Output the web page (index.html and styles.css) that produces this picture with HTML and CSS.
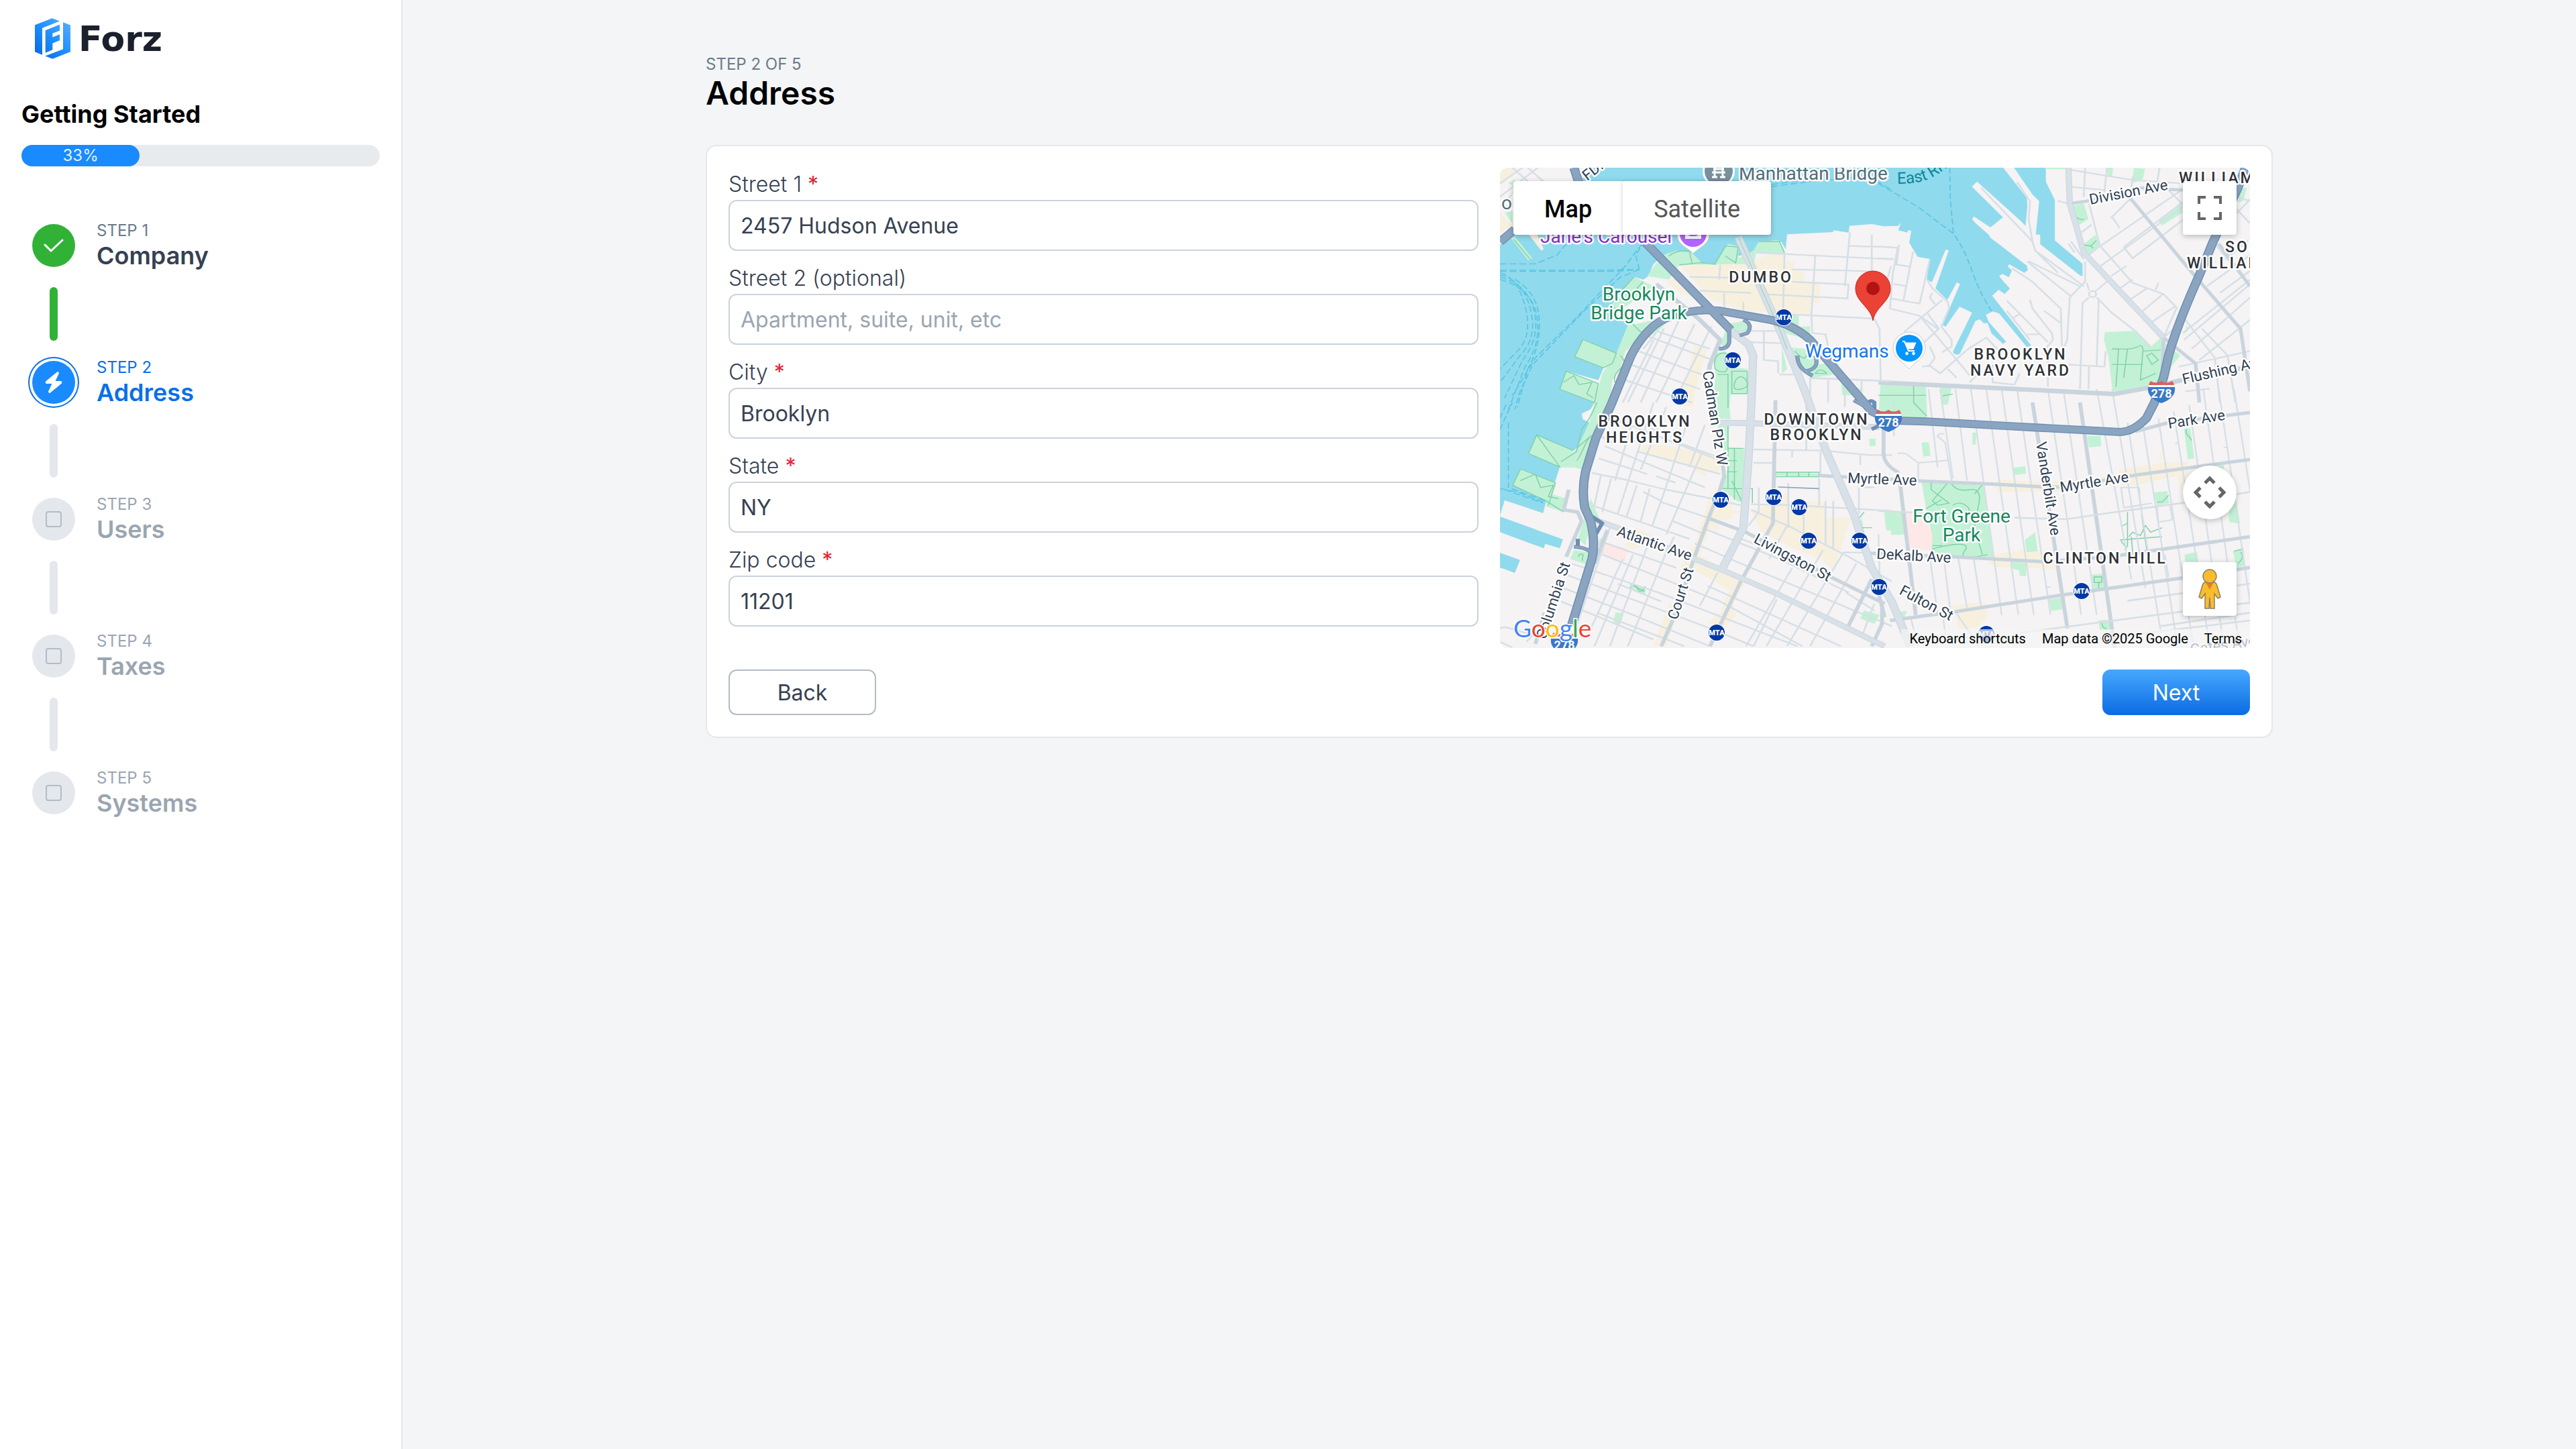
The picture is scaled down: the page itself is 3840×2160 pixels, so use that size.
FILE: index.html
```html
<!DOCTYPE html>
<html lang="en">
<head>
<meta charset="utf-8">
<title>Forz – Getting Started</title>
<link rel="stylesheet" href="styles.css">
</head>
<body>
<div class="app">
  <aside class="sidebar">
    <a class="logo" href="#">
      <svg class="logo-mark" viewBox="36 22 159 182" aria-hidden="true">
        <defs>
          <linearGradient id="lg" x1="36" y1="190" x2="190" y2="40" gradientUnits="userSpaceOnUse">
            <stop offset="0" stop-color="#0a66e0"/><stop offset=".45" stop-color="#1a8aff"/><stop offset="1" stop-color="#52adff"/>
          </linearGradient>
        </defs>
        <g fill="url(#lg)">
          <path d="M36 52 113 22l34 13-78 31v120l-33-14z"/>
          <path d="M83 76l64-26v28l-32 12v17l32-13v27l-32 13v29l-32 14z"/>
          <path d="M162 40l33 13v119l-80 32-33-13 80-31z"/>
        </g>
      </svg>
      <span class="logo-text">Forz</span>
    </a>
    <h2 class="side-title">Getting Started</h2>
    <div class="progress"><div class="progress-fill" style="width:33%">33%</div></div>
    <ol class="steps">
      <li class="step done">
        <span class="dot"><svg viewBox="0 0 64 64"><path d="M19 31l9 9 17-16" fill="none" stroke="#fff" stroke-width="3" stroke-linecap="round" stroke-linejoin="round"/></svg></span>
        <span class="step-text"><span class="step-no">STEP 1</span><span class="step-name">Company</span></span>
      </li>
      <li class="line line-done"></li>
      <li class="step current">
        <span class="dot"><svg viewBox="0 0 64 64"><path d="M38 17L21 31q-1 2 1 2h9l-6 13 1 1 17-14q1-2-1-2h-9l6-13z" fill="#fff" stroke="#fff" stroke-width="2" stroke-linejoin="round"/></svg></span>
        <span class="step-text"><span class="step-no">STEP 2</span><span class="step-name">Address</span></span>
      </li>
      <li class="line"></li>
      <li class="step">
        <span class="dot"><span class="stop"></span></span>
        <span class="step-text"><span class="step-no">STEP 3</span><span class="step-name">Users</span></span>
      </li>
      <li class="line"></li>
      <li class="step">
        <span class="dot"><span class="stop"></span></span>
        <span class="step-text"><span class="step-no">STEP 4</span><span class="step-name">Taxes</span></span>
      </li>
      <li class="line"></li>
      <li class="step">
        <span class="dot"><span class="stop"></span></span>
        <span class="step-text"><span class="step-no">STEP 5</span><span class="step-name">Systems</span></span>
      </li>
    </ol>
  </aside>

  <main class="main">
    <div class="content">
      <header class="head">
        <div class="head-step">STEP 2 OF 5</div>
        <h1 class="head-title">Address</h1>
      </header>
      <form class="card">
        <div class="columns">
          <div class="fields">
            <div class="field"><label for="s1">Street 1 <span class="req">*</span></label><input id="s1" type="text" value="2457 Hudson Avenue"></div>
            <div class="field"><label for="s2">Street 2 (optional)</label><input id="s2" type="text" placeholder="Apartment, suite, unit, etc"></div>
            <div class="field"><label for="city">City <span class="req">*</span></label><input id="city" type="text" value="Brooklyn"></div>
            <div class="field"><label for="state">State <span class="req">*</span></label><input id="state" type="text" value="NY"></div>
            <div class="field"><label for="zip">Zip code <span class="req">*</span></label><input id="zip" type="text" value="11201"></div>
          </div>

          <div class="map">
            <svg class="map-canvas" viewBox="0 0 1118 716" role="img" aria-label="Map of Brooklyn">
              <defs>
                <g id="mta"><circle r="13" fill="#fff"/><circle r="12" fill="#0039a6"/><text class="mta" y="4">MTA</text></g>
                <g id="i278">
                  <path d="M-19-11Q-18-15-16-17-8-12 0-17 8-12 16-17 18-15 19-11z" fill="#d9625c"/>
                  <path d="M-19-11H19V-8H-19z" fill="#fff"/>
                  <path d="M-20-8H20Q22 8 0 16-22 8-20-8z" fill="#3a78c9"/>
                  <text class="shield" y="8">278</text>
                </g>
              </defs>
              <rect width="1118" height="716" fill="#f5f3f4"/>
              <svg width="1118" height="716" viewBox="42 60 2921 2148" preserveAspectRatio="none">
                <!-- commercial areas -->
                <g fill="#f7f0df">
                  <path d="M42 60H110L60 130 42 140zM42 260L90 320 42 350z"/>
                  <path d="M745 500L1040 470 1100 445H1150V480H1188L1185 520H1225V575L1290 580V665H1255V715L990 700 850 640 780 540z"/>
                  <path d="M690 570L740 545 800 640 740 620z"/>
                  <path d="M800 855L850 870 800 1060 795 1130 735 1120 750 1040 770 1000z"/>
                  <path transform="translate(0 1110)" d="M600 190H680L870 235 900 270 895 310 850 305 845 330 800 310 790 285 700 260 590 215zM865 400L940 405 945 440V480L990 490 945 500V520L900 525 890 575 860 560 830 650 820 680 900 740 1000 800 950 900 960 960 900 1020 850 985 900 940 935 840 800 750 740 770 760 690 800 640 850 450zM700 900H745L690 1088H640zM570 560L630 590 620 620 560 660 530 640zM1020 480L1100 455 1165 400V440L1310 445V515H1410L1380 620 1340 750 1290 700 1180 650 1060 580z"/>
                  <path transform="translate(1516 1110)" d="M470 345L610 355 700 350 930 330 940 300 1100 270 1205 265 1210 300 1180 390 1160 330 1000 370 850 370 700 400H470L440 370zM450 680L600 650 700 700 690 745 450 735 425 720zM280 910L415 890 425 960 380 1010H310L300 930zM1095 215h8v50h-8z"/>
                </g>
                <!-- water -->
                <g fill="#90daed">
                  <path d="M42 405L100 355 320 150 355 120 400 60H2002L2094 195 2096 230 2089 320 2072 300 1900 122 1880 145 2001 282 1952 327 1888 278 1881 290 1896 310 1946 360 1951 372 2094 498 2098 518 2084 530 2026 492 2019 500 2036 520 2024 550 1998 535 1986 545 2008 575 2028 600 2008 625 1984 606 1959 632 2111 855 2094 862 1986 712 1961 703 1934 718 1946 750 2013 838 2001 848 1956 800 1941 755H1926L1911 738 1894 745 1834 890Q1820 905 1806 885L1811 870 1881 708 1832 682 1825 692 1778 770 1766 765 1796 680 1834 580 1821 573 1784 652 1738 600 1790 430 1778 426 1724 572 1704 560 1716 468 1668 458 1636 395 1644 342 1631 340 1629 350 1593 340 1604 306 1593 320 1536 322 1490 312 1403 320 1400 350 1340 340V348L1160 358 1155 425 1140 395 1125 385 1050 390 1045 415 1020 440 970 455 880 495 830 490 760 450 690 445 640 490 620 545 600 560 565 548 535 590 490 650 500 720 550 740 515 850 495 890 480 890 365 828 333 905 445 955 425 1010 300 970 275 1050 410 1110 395 1140 360 1160 365 1185 390 1200 345 1310 328 1325 185 1255 153 1338 275 1398 255 1470 122 1407 92 1480 222 1550 210 1605 60 1547 42 1615z"/>
                  <path d="M2044 60H2168V122L2203 205V385L2311 490V545L2302 542 2146 402V360L2129 358 2142 210 2116 180z"/>
                  <path d="M42 1620L287 1722 275 1762 218 1742 213 1762 42 1690zM42 1782L120 1814 100 1872 42 1848z"/>
                </g>
                <path d="M155 360L185 355 213 425 202 430zM535 850L550 860 520 960 495 1010 480 1000 510 920z" fill="#f5efe2"/>
                <!-- parks -->
                <g fill="#c3f1d5">
                  <path d="M85 375L100 368 168 465 152 475zM75 130L100 110 110 150zM60 260L90 255V310z"/>
                  <path d="M690 445L730 430 790 440 830 488 880 488 930 400 972 412 970 465 1030 430 1050 390 1125 385 1150 430V445L1040 440 1030 490 740 495 700 560 615 545 650 490z"/>
                  <path d="M565 548L640 590 520 690 470 680zM545 750L570 760 720 720 650 800 560 850 530 880 510 960 480 1010 470 1110 420 1220 385 1310 365 1410 330 1400 275 1400 345 1310 390 1200 410 1110 440 980 495 890z"/>
                  <path d="M365 828L495 890 480 935 445 955 333 905zM300 970L425 1025 410 1110 275 1050z"/>
                  <path d="M880 890L920 880 935 950 1005 960V1075H940L935 1140H870L880 1000zM930 760L1010 740 1020 790 960 800 920 860 900 850zM1150 720H1205V770H1250V830L1150 800zM1140 860L1230 870 1280 940 1360 930 1350 985 1250 1000 1180 900zM1140 860L1160 960 1140 980zM1370 1015H1410V1045L1455 1050 1450 1078H1375z"/>
                  <path transform="translate(0 1110)" d="M185 145L328 215 310 260 275 288 153 228zM122 297L258 360 245 410 302 430 290 490 222 465V440L92 370zM870 0H935L940 75 880 70zM890 105H935L930 200 995 205 990 450 965 440 905 385 930 300 910 200zM395 430L430 520 400 510 375 640 345 610 365 540zM330 660L385 670 380 725 315 700zM548 808L610 830 608 858 545 832zM492 938L524 945 510 995 484 982zM1480 162H1505V195H1482zM1115 312L1285 318 1282 333 1115 328zM1462 485L1450 520 1465 600 1430 560zM1460 930L1520 950 1500 990 1445 965zM430 610L440 605V640L425 635z"/>
                  <path transform="translate(1516 0)" d="M752 230L800 220 818 290 775 320zM995 60L1038 65 1030 110 988 130zM890 60H914L910 100 893 98zM1180 225L1185 260 1105 318 1092 300 1140 250zM797 405L845 360 862 408 820 455zM650 60H730V66H650zM1410 150H1435L1420 210 1400 215zM882 796L995 790 1060 862 1098 822 1175 900 1140 950 1130 1000 1050 1040 912 1062 895 900 878 830zM8 1022L185 1030 190 1178H0zM240 1042H285L270 1120 248 1118zM1200 765L1210 780 1195 800z"/>
                  <path transform="translate(1516 1110)" d="M168 355L412 372 447 692 205 685 210 600 180 440zM168 180L196 178 203 238 175 242zM366 135H382L378 188H366zM522 292L572 285 574 318 526 325zM812 150H865L868 195 820 202zM1190 118L1215 115 1230 250 1205 255zM22 490H97L103 590 50 592 48 572 30 570zM1073 403L1125 396 1132 450 1085 460zM1365 455L1395 440 1408 542 1365 535zM1192 680L1240 668 1246 712H1195zM1380 665L1422 650 1426 730 1395 738zM830 770L882 765 890 828 838 833zM665 880L712 873 718 925 672 932zM857 975L912 970 918 1018H862zM570 615L610 580 620 665 578 670zM515 710L575 718V778L550 775 548 750 525 745zM1320 285L1345 280V310zM60 940L112 932 100 960 60 965zM480 1040L530 1050 560 1090 500 1070z"/>
                </g>
                <path d="M1621 1605H1696L1726 1700 1721 1770 1638 1765zM455 1735L540 1765 528 1822 438 1790z" fill="#fde7e7"/>
                <!-- park paths -->
                <g fill="none" stroke="#7fd0aa" stroke-width="4">
                  <path d="M365 828L495 890 480 935 445 955 333 905zM300 970L425 1025 410 1110 275 1050zM290 1020l40-30 20 40 50-10-20 50 25 20M700 455q30-30 80-22l10 55M740 495l80-10 60 5 40-80 50 5-10 70-40-30M1050 390h80l20 50M565 548L490 640M600 570l-50 60 30 30M560 760l30 35 40-20M510 900q30 30 0 60t-20 60M880 960q-10-60 25-70t28 50l-10 30q-20 10-43-10zM890 985h40v150M945 970h60v100h-60zM960 1010q20-30 40 0t-20 40-20-40zM1190 880q40 50 45 20M1270 980q20-30 45 0zM95 380l65 90"/>
                  <path transform="translate(0 1110)" d="M185 145L328 215M153 228L275 288 185 145 153 228M122 297L258 360 230 460M122 297L92 370 222 440 290 490M120 350l60-30 20 60 50-10-20 50 40 10M345 200q60-60 50-50t-30 60-25 50M420 0q-30 80-60 120l-20 100-60 45M930 105v100l60 0M930 205v180M955 205v230M905 385h120v65M945 350l40 95M925 260h40M925 310h40M1115 312h170v20h-170zM1160 312v18M1205 312v18M1245 312v18M555 815l50 30M548 832q20-30 30 0t30-10M1430 530l30-40M1435 560h55M350 690q-5-10 8-12t5 15v15M1020 0v90"/>
                  <path transform="translate(1516 1110)" d="M205 360v30l70 60-45 10-20-20 63-85M185 475l60-40M285 365q20 35 70 25t35 70-15 110l30 110M225 680q-60-20 40 -40t70 25 90 15M210 640h40M290 460q30-25 60 10l20 50M405 368l-30 40M970 490v150l-10 20M1025 500l20 160M945 555l25-15M940 615l165-15M975 600l15-20 30 15 20-45 20 30 45-20M945 620l20 30M1085 445h20l25-30M1200 120q-5 20 8 30l12 20M1385 665l35-10M1400 720q30-30 10-50M840 780h30v25h-30zM858 800v30M870 980q0 30 20 32M985 600l5 70"/>
                  <path transform="translate(1516 0)" d="M797 405l30 5 22-25M827 410l8 10M910 870q80 5 100-10t20 20l70-5M910 940h120M935 870l-10 170M970 870l-15 130M1030 880l-10 130 60-30M1045 900l20-10 25 30-25 20zM760 240q5 60 40 50M0 1078h185M137 1030v80l50 60M250 1080l40-8"/>
                </g>
                <!-- streets -->
                <g fill="none" stroke="#d6dfe6" stroke-width="7" stroke-linejoin="round">
                  <path d="M42 130L130 60M42 190L190 60M90 60L230 200M42 230L100 170M150 60L250 160"/>
                  <path d="M1040 440L1400 460 1568 470M1270 455L1255 715M1150 440L1145 690M1400 410L1568 415M1405 350L1385 590M1490 360V520M1180 515L1400 520 1500 525M780 548L1030 555M1180 570L1400 582 1395 645M1060 625L1400 645M820 610L1020 620M900 495L895 560M915 620V690M990 660V700M1160 715L1500 735 1520 780 1525 1010M1255 715L1258 800 1310 805 1320 860M960 790H1130M1010 840L1140 845M1070 790V920L1125 925V980M1130 985H1185M1250 1000V1180M1320 1010V1110M1385 1010V1130M1450 1010V1110M1565 500L1545 580"/>
                  <path d="M620 815L870 920M580 880L840 990M550 940L820 1050M530 1010L790 1110M600 870L650 800M740 740L590 1110M800 760L650 1110M680 780L540 1110M865 770L720 1110M640 830L520 1110M650 790L860 870"/>
                  <path transform="translate(0 1110)" d="M450 195L840 380M520 60L700 150M427 250L615 320M650 330L725 358M400 315L530 345 690 390 870 430 980 460M750 185L880 240M500 80L900 260M580 220L900 320M670 445L850 515M400 460L630 550 780 610M715 530L840 590M600 400L670 440M410 460L435 325M440 490L475 340M500 500L640 0M535 510L575 370M590 530L625 385M635 550L685 390 780 60M490 350L560 80M590 300L690 20M780 290L840 100M690 590L830 220M700 650L720 600M400 130L480 180"/>
                  <path transform="translate(0 1110)" d="M320 720L660 850 1200 1090M300 770L860 1010 1030 1090M440 680L900 890 1220 1090M290 830L560 950 860 1090M280 890L640 1060M420 940L760 1090M430 620L730 740M500 810L670 890M800 630L980 720 1568 1000M830 560L1130 700 1400 850M850 820L1370 1090M42 1010Q60 1000 80 1010L170 1040 145 1070M42 1070L90 1095"/>
                  <path transform="translate(0 1110)" d="M630 600L470 1090M700 640L540 1090M560 680L410 1090M470 560L340 1000M520 700L400 1000M790 740L670 1090M890 760L820 910M1180 740L1000 1090M1300 660L1080 1090M1380 670L1160 1090M1430 720L1250 1090M1050 640L960 600M1120 880L1030 1090M1160 550L1090 700M1165 360V560M1225 460V660M1310 440V640M1340 440V660M1285 340V460M1440 380V500M1020 455L1200 460 1568 485M1050 380V490L1010 550M1020 480L1180 560 1400 690M1380 670L1490 672M1400 690L1568 800M1030 210L1300 215 1480 235H1568M1030 270H1105M1180 210V245M1235 0V215M1290 220V330M1445 230V280M1500 380H1445M1450 1050L1500 900M1390 850L1500 930"/>
                  <path transform="translate(1516 0)" d="M750 70L990 115 1180 130M745 145L880 160M805 60L800 190M890 60L880 170M990 100L980 200M1095 60L1085 130M698 208L745 222M820 220L862 408 990 575 1110 625 1165 690M790 350L830 315M865 410L1180 160M820 450L865 408M865 500L1190 230M905 545L965 500M905 285L980 200M910 280L940 330M955 415L1190 210M955 415L990 465 1190 290M940 600L990 560M980 650L1045 600M1025 705L1108 625M1065 750L1155 680M1080 605L1090 575M1110 820L1160 770M1160 690L1110 820M1190 830L1448 580M1220 870L1448 640M1250 920L1448 740M1170 950L1448 880M1280 590L1448 450M1330 620L1448 520M1185 800L1448 560M1390 240L1448 310M1310 400L1448 590M1340 330L1448 200M1350 470L1448 380M1195 740L1310 910 1330 1110M1260 780L1360 900 1390 1110M1130 160L1190 230M1400 190L1448 210M1195 1060L1290 1048"/>
                  <path transform="translate(1516 0)" d="M400 150L600 390 610 430 800 590M540 125L590 210 585 290 600 390M583 478L785 590M520 510L600 570 710 690 715 860M610 430L700 530M580 480L750 635M805 480V570L745 640 735 830 720 870M740 400L765 440M750 390L800 470M812 575L820 608M845 612L890 570M850 640L910 710 1000 790 1060 860M820 640L795 665 785 1050M858 645L850 945M735 940L880 950 885 880M820 950L818 1050M590 650L600 690 675 800 680 830 650 870M645 700L710 755M500 655L660 840M500 700L590 830M520 735L550 715M580 805H625"/>
                  <circle cx="2350" cy="625" r="14"/>
                  <path transform="translate(1516 0)" d="M0 412L75 418 55 540 45 690 160 722 230 780M80 405L70 495M135 435L97 655M0 465L60 468M65 492L120 502M60 580L110 590M50 645L160 668 200 470M190 560L210 600 270 660 275 690 245 770 285 830V860L248 885M250 650L100 795M160 722L360 995M190 710L235 780 170 850M210 620L200 640 220 670M420 820L350 870M420 820L470 880M355 1020L380 990M445 940V1020L530 1030 550 980M240 980L350 870M170 950L200 945 240 980M270 960L305 1000M660 900V1040M200 860L220 910 195 950"/>
                  <g stroke-width="6">
                    <path transform="translate(1516 1050)" d="M195 0L230 350M240 0L290 400M300 0L345 410M360 0L480 1010M420 0L545 1010M480 0L605 1010M540 0L670 1010M660 0L790 1010M720 0L850 1010M850 0L985 850M910 0L1040 890M970 150L1100 1090M1030 160L1165 1150M1090 130L1225 1140M1150 100L1290 1150M1210 70L1345 1150M1265 0L1405 1150M1325 0L1448 960M1385 0L1448 460"/>
                    <path transform="translate(1516 1110)" d="M255 700L280 930M310 690L345 920M200 690L230 940M370 690L400 915M155 270L275 258M75 230Q100 220 120 240L155 270V350M230 150L260 180 285 350M230 155Q230 135 255 140M60 0V150M1344 200h18M650 825h22M1155 182h15M0 590L5 780M125 960L155 1090M300 935L390 1090M250 940L260 1040M945 380L1015 380 1020 460 955 470zM955 470L1065 450M1085 460L1090 535 1145 525 1135 460M1115 680L1130 780"/>
                  </g>
                </g>
                <!-- avenues -->
                <g fill="none" stroke="#c9d4dd" stroke-width="15" stroke-linejoin="round">
                  <path d="M1516 1020L1916 1042 2436 1072 2566 1045 2696 1010 2963 950" stroke-width="20"/>
                  <path d="M1290 1437L1666 1460 1966 1475 2166 1488H2236L2516 1435 2963 1365M1480 1784L1806 1800 2156 1822 2416 1800 2566 1775 2963 1710M1561 2085L1816 2045 2236 1970 2696 1895 2963 1848M2116 1110L2252 2120M2301 1110L2436 2208M1600 1470L1661 2060M1536 1180V1340Q1540 1390 1590 1420L1606 1470M2516 1240L2646 1200 2963 1155"/>
                  <path d="M1250 1000L1568 1015M1516 1595L1716 1605M2046 1625L2246 1632 2426 1602 2706 1558 2963 1510M2066 2140L2236 2115 2963 2005M2486 1997L2963 1920M2616 2110L2963 2050M2200 2190L2963 2085" stroke="#d6dfe6" stroke-width="8"/>
                  <path d="M2256 60L2261 220 2316 440 2626 820" stroke-width="24"/>
                  <path d="M2626 820L2751 935 2766 1110M2261 220L2326 210 2536 150 2706 160M2496 195L2716 500 2776 580 2926 780 2963 1060M2626 820L2620 1040M2841 400L2963 590" stroke-width="14"/>
                  <path d="M880 1200L1000 1202 1520 1220" stroke-width="26"/>
                  <path d="M855 975L860 940 900 830 820 740 650 580" stroke-width="18"/>
                  <path d="M910 1390L915 1440 895 1510 860 1610 800 1800 720 2070 670 2200M1115 1100L1105 1650 980 1910 860 2200M860 1630L1000 1690 1330 1890 1540 2010M1490 1900L1390 2130M180 2190L215 2050M300 1800L360 1640 345 1600 290 1590 310 1500M1516 1960L1540 2070M460 1680L410 1830M1530 2010V2100L1490 2200" stroke-width="15"/>
                  <path d="M400 1630L500 1670 800 1810 910 1860 1130 1970 1540 2200" stroke-width="24"/>
                </g>
                <g fill="none" stroke="#c9d4dd" stroke-width="32" stroke-linejoin="round">
                  <path d="M970 370L1130 780 1180 920 1230 1060 1310 1320 1420 1610 1490 1850 1568 2000 1640 2200"/>
                  <path d="M940 790L1010 850 1028 900 1020 1140 1010 1360 990 1670 905 1860"/>
                </g>
                <g fill="none" stroke="#d8e1e8" stroke-width="26" stroke-linejoin="round">
                  <path d="M970 370L1130 780 1180 920 1230 1060 1310 1320 1420 1610 1490 1850 1568 2000 1640 2200"/>
                  <path d="M940 790L1010 850 1028 900 1020 1140 1010 1360 990 1670 905 1860"/>
                  <path d="M400 1630L500 1670 800 1810 910 1860 1130 1970 1540 2200M880 1200L1000 1202 1520 1220M2256 60L2261 220 2316 440 2626 820" stroke-width="19"/>
                </g>
                <path d="M970 370L1130 780 1160 870" fill="none" stroke="#9cd6b8" stroke-width="3"/>
                <!-- expressways -->
                <g fill="none" stroke="#6e8fb3" stroke-width="36" stroke-linejoin="round">
                  <path d="M320 2110L400 1810Q415 1740 395 1640L372 1580Q360 1500 375 1420L415 1270 475 1120 545 920Q570 850 620 790T740 715Q810 690 900 700L1070 735Q1180 755 1250 830L1310 910 1400 1030 1490 1150 1560 1190 1700 1195 2016 1215 2456 1242Q2510 1240 2560 1180L2591 1110 2626 1000 2646 900Q2680 760 2766 540L2816 400 2916 150 2945 60"/>
                  <path d="M42 392L100 335M600 385L940 785M330 60L350 130"/>
                  <path d="M935 780V840Q930 870 895 870M990 740Q1030 760 1005 800L975 810M1200 900Q1200 960 1260 990M1230 970Q1290 960 1270 900M330 1755Q390 1760 400 1790M400 1620L440 1650 415 1700M345 1720V1750M1420 1100L1500 1150M1470 1130Q1480 1090 1500 1110V1160M1490 1230L1540 1200" stroke-width="16"/>
                </g>
                <g fill="none" stroke="#8ba4c0" stroke-width="28" stroke-linejoin="round">
                  <path d="M320 2110L400 1810Q415 1740 395 1640L372 1580Q360 1500 375 1420L415 1270 475 1120 545 920Q570 850 620 790T740 715Q810 690 900 700L1070 735Q1180 755 1250 830L1310 910 1400 1030 1490 1150 1560 1190 1700 1195 2016 1215 2456 1242Q2510 1240 2560 1180L2591 1110 2626 1000 2646 900Q2680 760 2766 540L2816 400 2916 150 2945 60"/>
                  <path d="M42 392L100 335M600 385L940 785M330 60L350 130"/>
                  <path d="M935 780V840Q930 870 895 870M990 740Q1030 760 1005 800L975 810M1200 900Q1200 960 1260 990M1230 970Q1290 960 1270 900M330 1755Q390 1760 400 1790M1420 1100L1500 1150" stroke-width="10"/>
                  <path d="M1125 1488L1285 1495" stroke-width="5"/>
                </g>
                <!-- ferry routes -->
                <g fill="none" stroke="#53c3e2" stroke-width="4" stroke-dasharray="26 12">
                  <path d="M42 490H180L265 450 300 400M42 518H460L585 515M42 524H480L580 516M585 515L510 550 370 700 170 940 120 1060 100 1140M595 400L530 500 340 730 180 910 90 1080M585 515L570 450 600 400M42 530Q110 550 140 680T110 880L42 960M42 540Q130 560 160 690T120 900L42 1020M42 550Q150 580 175 700T130 920L60 1090M42 560Q165 600 185 720T140 950L75 1140M100 560Q190 620 195 740T150 960L110 1130M42 1230L90 1110M42 1180L70 1110M75 1200V1490L220 1550M42 1495L110 1510 220 1560M60 1500L210 1560M1098 145L1260 120 1480 100 1568 160M1100 135L1200 120"/>
                  <path d="M1794 60L1796 200 1808 355M1516 130L1676 240 1808 355Q1850 420 1880 520T1956 700"/>
                </g>
              </svg>

              <!-- place icons -->
              <circle cx="326" cy="5" r="24" fill="#fff"/><circle cx="326" cy="5" r="21" fill="#78909c"/>
              <path d="M318 2h16M316 7h20M320 0v14M332 0v14M316 14h8M328 14h8" stroke="#fff" stroke-width="3"/>
              <path d="M288 76a24 24 0 0 1 24 24c0 14-14 18-24 28-10-10-24-14-24-28a24 24 0 0 1 24-24z" fill="#fff" stroke="#b9c4c8"/>
              <circle cx="288" cy="98" r="20" fill="#b164ff"/><path d="M276 106v-8l8 4h8l8-4v8z" fill="#fff"/>
              <path d="M610 245a24 24 0 0 1 24 24c0 15-16 21-24 31-8-10-24-16-24-31a24 24 0 0 1 24-24z" fill="#fff" stroke="#c9c9cc"/>
              <circle cx="610" cy="269" r="20" fill="#0795ff"/>
              <path d="M600 259h3l6 14h9" fill="none" stroke="#fff" stroke-width="2"/><path d="M604 261h16l-4 9h-8zM606 275a2 2 0 1 0 1 0zM616 275a2 2 0 1 0 1 0z" fill="#fff" stroke="#fff"/>
              <use href="#i278" x="579" y="378"/><use href="#i278" x="986" y="335"/><use href="#i278" x="96" y="710"/>
              <use href="#mta" x="423" y="223"/><use href="#mta" x="347" y="287"/><use href="#mta" x="268" y="341"/><use href="#mta" x="329" y="495"/><use href="#mta" x="408" y="491"/><use href="#mta" x="446" y="506"/><use href="#mta" x="460" y="556"/><use href="#mta" x="536" y="556"/><use href="#mta" x="565" y="625"/><use href="#mta" x="323" y="693"/><use href="#mta" x="867" y="631"/><use href="#mta" x="725" y="695"/>

              <g class="lbl area">
                <text x="389" y="171">DUMBO</text>
                <text x="776" y="286">BROOKLYN</text><text x="776" y="310">NAVY YARD</text>
                <text x="216" y="386">BROOKLYN</text><text x="216" y="410">HEIGHTS</text>
                <text x="472" y="383">DOWNTOWN</text><text x="472" y="406">BROOKLYN</text>
                <text x="902" y="590">CLINTON HILL</text>
              </g>
              <g class="lbl area start">
                <text x="1012" y="23">WILLIAMSBURG</text><text x="1081" y="126">SOUTH</text><text x="1024" y="150">WILLIAMSBURG</text>
              </g>
              <g class="lbl place park"><text x="207" y="198">Brooklyn</text><text x="207" y="226">Bridge Park</text><text x="688" y="529">Fort Greene</text><text x="688" y="557">Park</text></g>
              <g class="lbl place start"><text x="455" y="283" fill="#1a73e8">Wegmans</text><text x="356" y="18" fill="#546e7a">Manhattan Bridge</text><text x="60" y="112" fill="#8430ce">Jane's Carousel</text><text x="2" y="62" fill="#546e7a">ol</text></g>
              <path id="er" d="M592 24Q620 24 636 18T700-24" fill="none"/>
              <text class="river"><textPath href="#er">East River</textPath></text>
              <g class="lbl road">
                <text transform="translate(130 20) rotate(-38)">FDR Dr</text>
                <text transform="translate(880 55) rotate(-11)">Division Ave</text>
                <text transform="translate(1019 323) rotate(-13)">Flushing Ave</text>
                <text transform="translate(997 389) rotate(-9)">Park Ave</text>
                <text transform="translate(518 470) rotate(2)">Myrtle Ave</text>
                <text transform="translate(836 484) rotate(-9)">Myrtle Ave</text>
                <text transform="translate(561 583) rotate(3)">DeKalb Ave</text>
                <text transform="translate(594 635) rotate(28)">Fulton St</text>
                <text transform="translate(799 410) rotate(81)">Vanderbilt Ave</text>
                <text transform="translate(302 304) rotate(81)">Cadman Plz W</text>
                <text transform="translate(377 558) rotate(28)">Livingston St</text>
                <text transform="translate(173 548) rotate(19)">Atlantic Ave</text>
                <text transform="translate(264 675) rotate(-72)">Court St</text>
                <text transform="translate(68 704) rotate(-72)">Columbia St</text>
                <text transform="translate(1030 726) rotate(-8)">Gates Ave</text>
              </g>
              <path d="M556 228c-3-20-26-28-26-48a26 26 0 0 1 52 0c0 20-23 28-26 48z" fill="#ea4335" stroke="#c5221f"/>
              <circle cx="556" cy="180" r="10" fill="#b31412"/>
              <text class="google" x="20" y="700"><tspan fill="#4285f4">G</tspan><tspan fill="#ea4335">o</tspan><tspan fill="#fbbc04">o</tspan><tspan fill="#4285f4">g</tspan><tspan fill="#34a853">l</tspan><tspan fill="#ea4335">e</tspan></text>
            </svg>

            <div class="map-types"><button type="button" class="type active">Map</button><button type="button" class="type">Satellite</button></div>
            <button type="button" class="ctl ctl-full" aria-label="Toggle fullscreen view"><svg viewBox="0 0 36 36"><path d="M2 12V2h10M24 2h10v10M34 24v10H24M12 34H2V24" fill="none" stroke="#666" stroke-width="4"/></svg></button>
            <div class="ctl-stack">
              <button type="button" class="ctl ctl-round" aria-label="Map camera controls"><svg class="pan" viewBox="0 0 48 48"><path d="M17 10l7-7 7 7M17 38l7 7 7-7M10 17l-7 7 7 7M38 17l7 7-7 7" fill="none" stroke="#666" stroke-width="5"/></svg></button>
              <button type="button" class="ctl" aria-label="Street View"><svg class="peg" viewBox="0 0 36 62"><path d="M11 21q7-3 14 0 3 1 4 5l5 17-4 2-5-7v22h-6l-1-16-1 16h-6V38l-5 7-4-2 5-17q1-4 4-5z" fill="#fbbc2c" stroke="#8a8066" stroke-width="1.5"/><path d="M12 21h12l-6 11z" fill="#e37f2a"/><circle cx="18" cy="12" r="10" fill="#fbbc2c" stroke="#8a8066" stroke-width="1.5"/></svg></button>
            </div>
            <div class="map-foot"><a href="#">Keyboard shortcuts</a><span>Map data ©2025 Google</span><a href="#">Terms</a></div>
          </div>
        </div>
        <div class="actions"><button type="button" class="btn btn-back">Back</button><button type="submit" class="btn btn-next">Next</button></div>
      </form>
    </div>
  </main>
</div>
</body>
</html>
```
FILE: styles.css
```css
* { box-sizing: border-box; }
body { margin: 0; font-family: Inter, sans-serif; font-size: 32px; color: #364152; background: #f3f5f7; }
h1, h2, ol { margin: 0; padding: 0; }
a { color: inherit; text-decoration: none; }
button, input { font: inherit; color: inherit; }

.app { display: flex; min-height: 100vh; }

/* Sidebar */
.sidebar { flex: none; width: 600px; padding: 27px 32px; background: #fff; border-right: 2px solid #e4e7eb; }
.logo { display: flex; align-items: center; gap: 12px; padding-left: 20px; }
.logo-mark { width: 53px; height: 61px; }
.logo-text { font: bold 52px/56px "DejaVu Sans", sans-serif; color: #1a202c; }
.side-title { margin-top: 60px; font-size: 36px; line-height: 44px; font-weight: 700; color: #000; }
.progress { margin-top: 24px; height: 32px; border-radius: 16px; background: #e8ebee; }
.progress-fill { height: 32px; border-radius: 16px; background: #1a8aff; color: #e3f2ff; font-size: 24px; line-height: 32px; text-align: center; }
.steps { margin-top: 86px; padding: 0 16px; list-style: none; }
.step { display: flex; align-items: center; gap: 32px; height: 64px; color: #9aa5b1; }
.dot { display: flex; align-items: center; justify-content: center; flex: none; width: 64px; height: 64px; border-radius: 50%; background: #e4e7ec; }
.dot svg { width: 64px; height: 64px; }
.stop { width: 24px; height: 24px; border: 2px solid #b2bcc6; border-radius: 4px; }
.step-text { display: flex; flex-direction: column; padding-bottom: 2px; }
.step-no { font-size: 24px; line-height: 32px; }
.step-name { font-size: 36px; line-height: 42px; font-weight: 600; }
.done .dot { background: #31b237; }
.done .step-no { color: #6b7a8a; }
.done .step-name { color: #364152; }
.current { color: #0b6fe6; }
.current .dot { background: #1a8aff; box-shadow: 0 0 0 4px #fff, 0 0 0 6px #0b6fe6; }
.line { width: 12px; height: 80px; margin: 30px 26px; border-radius: 6px; background: #e4e7ec; }
.line-done { background: #31b237; }

/* Main */
.main { flex: 1; min-width: 0; }
.content { max-width: 2400px; margin: 0 auto; padding: 80px 32px; }
.head { margin-bottom: 50px; }
.head-step { font-size: 24px; line-height: 32px; color: #6b7a8a; }
.head-title { font-size: 48px; line-height: 54px; font-weight: 600; color: #000; }
.card { padding: 32px; border: 2px solid #e4e7eb; border-radius: 16px; background: #fff; }
.columns { display: grid; grid-template-columns: 1fr 1fr; gap: 32px; }
.fields { display: flex; flex-direction: column; gap: 16px; }
.field { display: flex; flex-direction: column; }
.field label { padding-top: 2px; line-height: 46px; font-weight: 300; }
.req { color: #e02536; font-weight: 400; }
.field input { width: 100%; height: 76px; padding: 0 16px; border: 2px solid #cbd2dc; border-radius: 12px; background: #fff; outline: 0; }
.field input::placeholder { color: #9aa5b1; opacity: 1; }
.actions { display: flex; justify-content: space-between; margin-top: 32px; }
.btn { width: 220px; height: 68px; border-radius: 12px; padding: 0; }
.btn-back { border: 2px solid #b2bcc6; background: #fff; }
.btn-next { border: 0; color: #fff; background: linear-gradient(#47a8ff, #0b6be2); }

/* Map */
.map { position: relative; overflow: hidden; border-radius: 12px; font-family: Roboto, sans-serif; align-self: start; }
.map-canvas { display: block; width: 100%; height: auto; font-family: Roboto, sans-serif; }
.lbl { stroke: #fff; stroke-width: 5px; stroke-linejoin: round; paint-order: stroke; }
.area { font-size: 23px; font-weight: 500; letter-spacing: 3px; text-anchor: middle; fill: #303236; }
.place { font-size: 28px; }
.park { text-anchor: middle; fill: #17875d; }
.start { text-anchor: start; }
.road { font-size: 22px; fill: #303f53; }
.river { font-size: 24px; fill: #0b8696; }
.mta { font-size: 11px; font-weight: 900; fill: #fff; text-anchor: middle; }
.shield { font-size: 18px; font-weight: 700; fill: #fff; text-anchor: middle; }
.google { font-family: Lato, sans-serif; font-size: 37px; stroke: #fff; stroke-width: 3px; paint-order: stroke; }
.map-types, .ctl { background: #fff; border: 0; border-radius: 4px; box-shadow: 0 2px 8px rgba(0, 0, 0, .25); }
.map-types { position: absolute; left: 20px; top: 20px; display: flex; }
.type { height: 80px; padding: 4px 46px 0; border: 0; border-radius: 4px; background: none; font-size: 36px; color: #565656; }
.type + .type { box-shadow: -2px 0 4px rgba(0, 0, 0, .1); }
.type.active { color: #000; font-weight: 500; }
.ctl { display: flex; align-items: center; justify-content: center; width: 80px; height: 80px; padding: 0; }
.ctl svg { width: 36px; height: 36px; }
.ctl svg.pan { width: 48px; height: 48px; }
.ctl svg.peg { width: 36px; height: 62px; }
.ctl-full { position: absolute; right: 20px; top: 20px; }
.ctl-stack { position: absolute; right: 20px; bottom: 48px; display: flex; flex-direction: column; gap: 64px; }
.ctl-round { border-radius: 50%; }
.map-foot { position: absolute; right: 0; bottom: 0; display: flex; gap: 24px; padding: 0 12px; font-size: 20px; line-height: 28px; color: #000; background: rgba(245, 245, 245, .7); }
```
